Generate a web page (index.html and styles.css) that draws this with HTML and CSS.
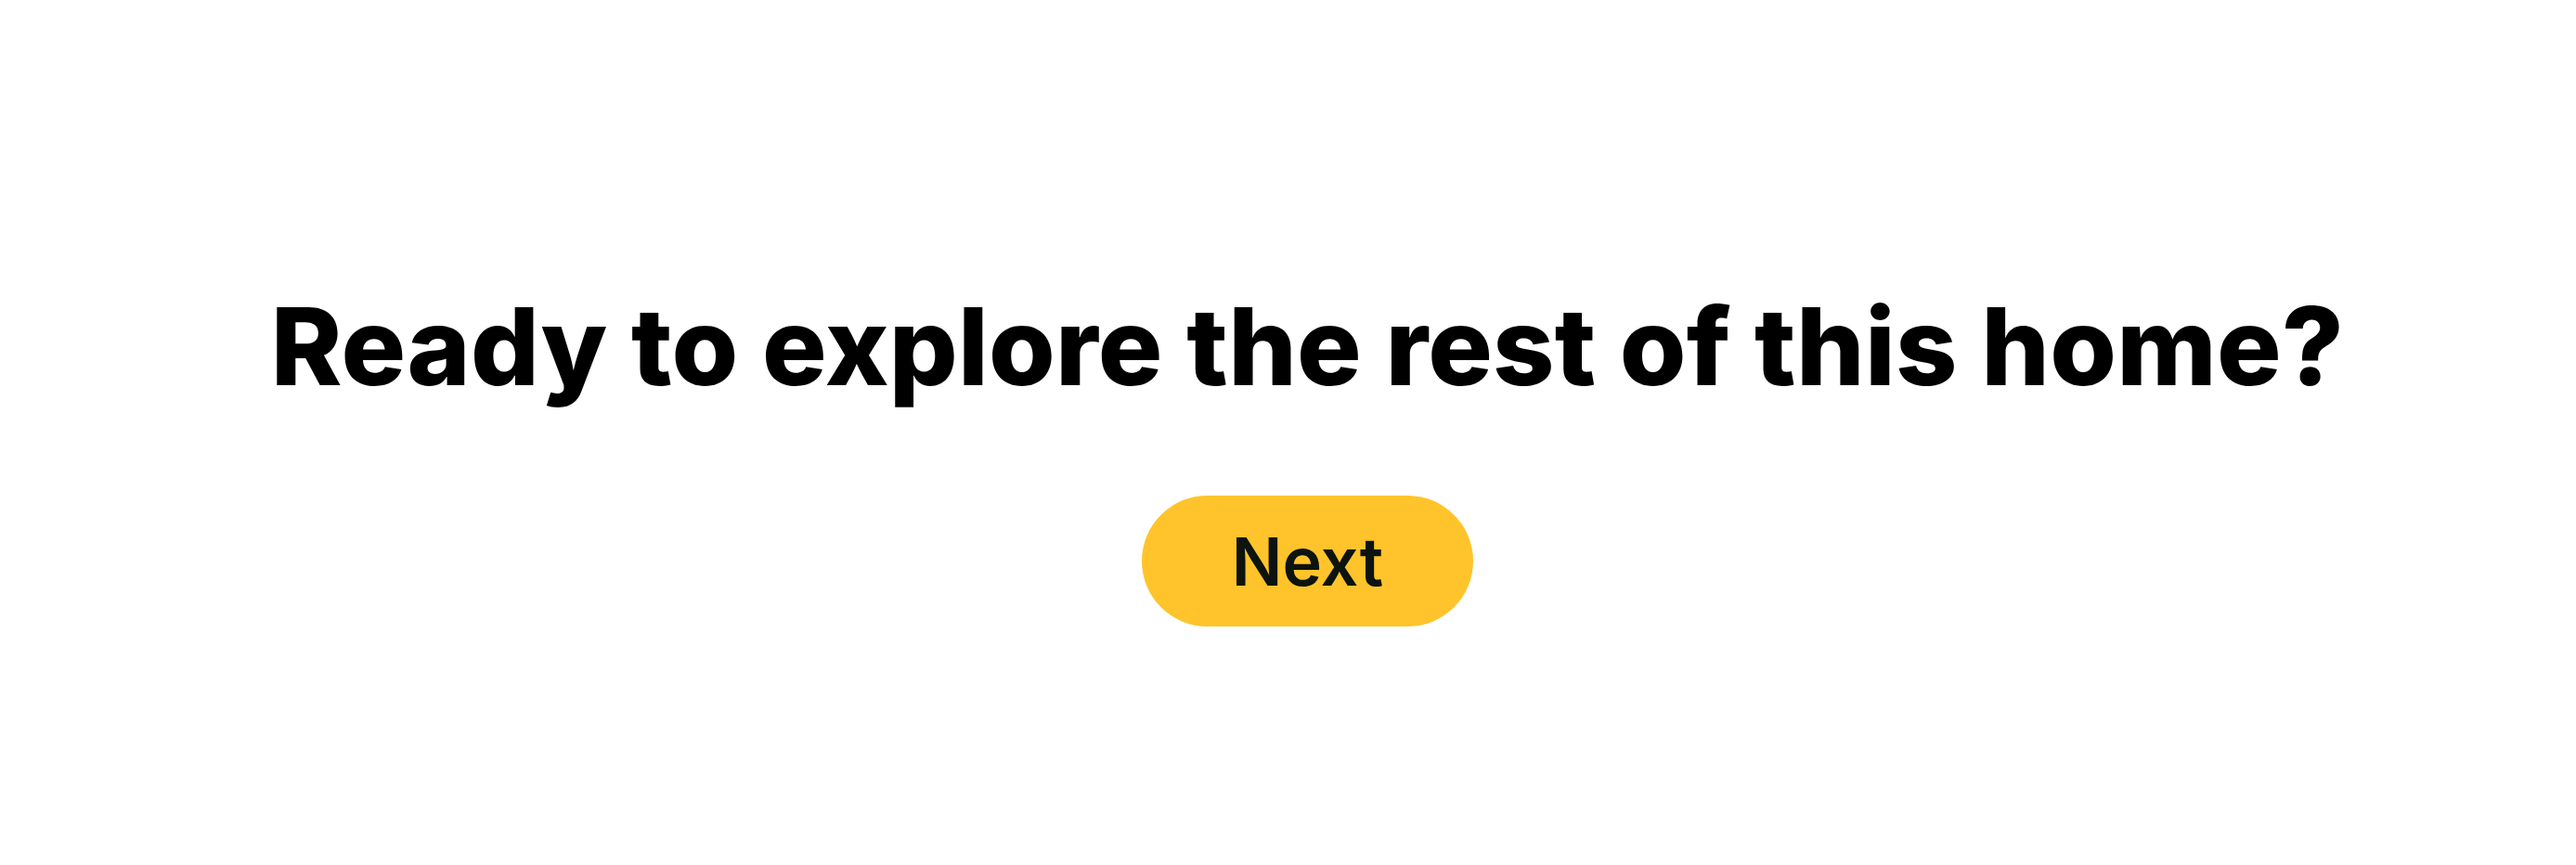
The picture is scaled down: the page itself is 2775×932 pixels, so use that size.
FILE: index.html
```html
<!DOCTYPE html>
<html lang="en">
<head>
<meta charset="utf-8">
<title>Ready to explore</title>
<link rel="stylesheet" href="styles.css">
</head>
<body>
<main class="prompt">
  <h1 class="prompt-title">Ready to explore the rest of this home?</h1>
  <button class="next-btn" type="button">Next</button>
</main>
</body>
</html>
```
FILE: styles.css
```css
html, body {
  margin: 0;
  padding: 0;
  background: #ffffff;
}
body {
  width: 2775px;
  height: 932px;
  font-family: "Inter", "Liberation Sans", sans-serif;
}
.prompt {
  display: flex;
  flex-direction: column;
  align-items: center;
  padding-top: 303px;
  padding-left: 42px;
}
.prompt-title {
  margin: 0;
  font-size: 116px;
  font-weight: 800;
  letter-spacing: 0.2px;
  line-height: 140px;
  color: #000000;
  white-space: nowrap;
}
.next-btn {
  margin-top: 91px;
  width: 357px;
  height: 141px;
  border: none;
  border-radius: 71px;
  background: #ffc42b;
  color: #0d130e;
  font-family: inherit;
  font-size: 72px;
  font-weight: 600;
  padding: 0;
  cursor: pointer;
}
```
